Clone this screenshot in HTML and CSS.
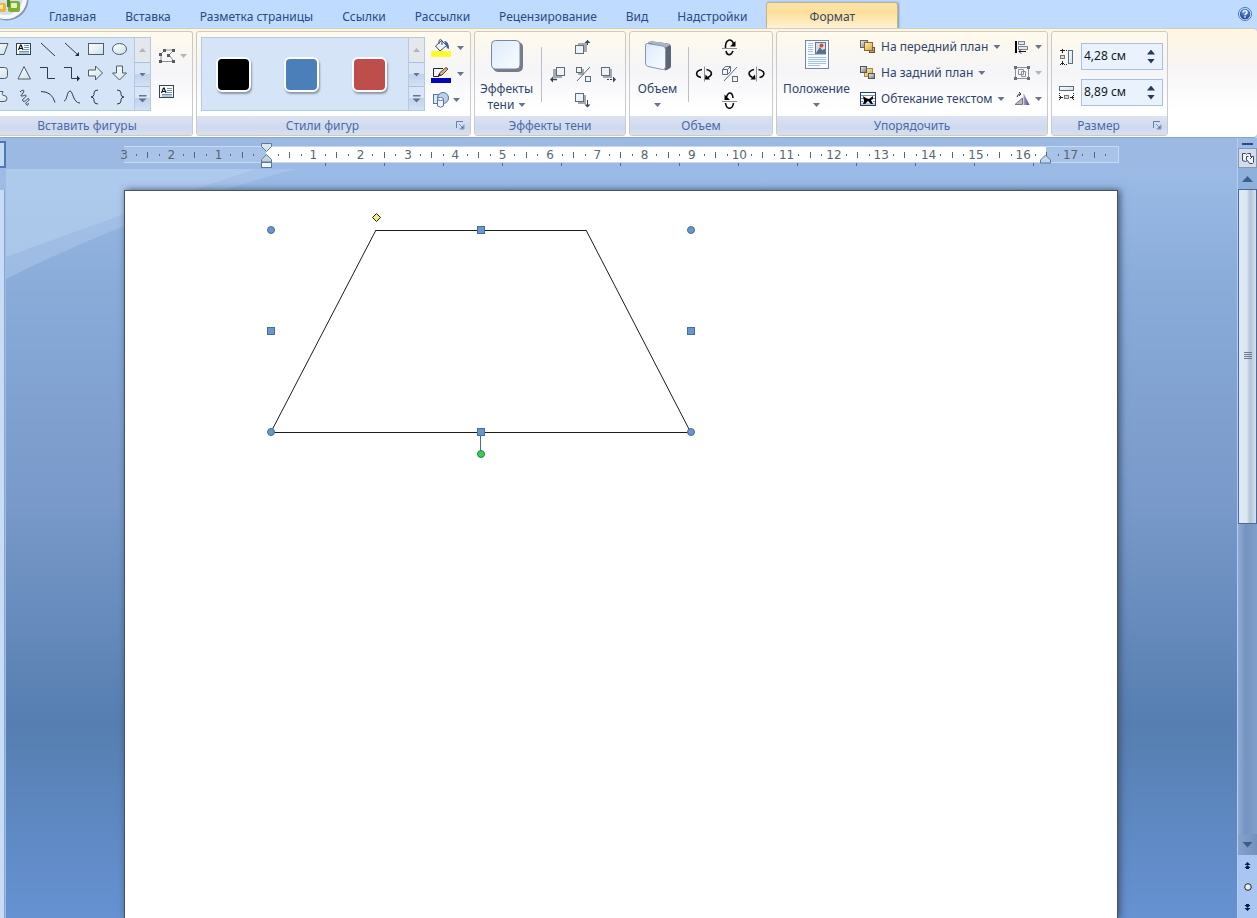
FILE: index.html
```html
<!DOCTYPE html>
<html lang="ru">
<head>
<meta charset="utf-8">
<title>Документ</title>
<link rel="stylesheet" href="styles.css">
</head>
<body>
<svg class="defs" width="0" height="0" aria-hidden="true">
  <defs>
    <linearGradient id="gShape" x1="0" y1="0" x2="1" y2="1"><stop offset="0" stop-color="#fff"/><stop offset="1" stop-color="#cfe0e6"/></linearGradient>
    <linearGradient id="gBig" x1="0" y1="0" x2="1" y2="1"><stop offset="0" stop-color="#dceafc"/><stop offset="1" stop-color="#fbfdff"/></linearGradient>
    <linearGradient id="gGold" x1="0" y1="0" x2="1" y2="1"><stop offset="0" stop-color="#fdf0b0"/><stop offset="1" stop-color="#d9a63a"/></linearGradient>
    <linearGradient id="gGrey" x1="0" y1="0" x2="1" y2="1"><stop offset="0" stop-color="#f4f4f4"/><stop offset="1" stop-color="#777"/></linearGradient>
    <linearGradient id="gViolet" x1="0" y1="0" x2="1" y2="0"><stop offset="0" stop-color="#a99fd0"/><stop offset="1" stop-color="#4b4188"/></linearGradient>
    <radialGradient id="gHelp" cx=".5" cy=".3" r=".7"><stop offset="0" stop-color="#6fa2e8"/><stop offset="1" stop-color="#173f94"/></radialGradient>
  </defs>
</svg>

<header class="tabbar">
  <button class="office" aria-label="Кнопка Office">
    <svg width="30" height="22" viewBox="0 0 30 22"><circle cx="7" cy="-1" r="21.500" fill="#8795ad"/><circle cx="6" cy="-2" r="21" fill="#f6f8fb"/><circle cx="5" cy="-3" r="18" fill="#d5dfec"/><rect x="-4" y="3" width="10" height="9" rx="2" fill="#f1b33c"/><rect x="-1" y="5" width="4" height="4" fill="#fde9a8"/><rect x="8" y="1" width="12" height="11" rx="2" fill="#7fae34"/><rect x="11" y="3" width="6" height="5" rx="1" fill="#e4f2bd"/><rect x="7" y="0" width="3" height="7" fill="#4e8a2c"/></svg>
  </button>
  <nav class="tabs">
    <a href="#home">Главная</a>
    <a href="#insert">Вставка</a>
    <a href="#layout">Разметка страницы</a>
    <a href="#refs">Ссылки</a>
    <a href="#mail">Рассылки</a>
    <a href="#review">Рецензирование</a>
    <a href="#view">Вид</a>
    <a href="#addins">Надстройки</a>
    <a href="#format" class="active">Формат</a>
  </nav>
  <button class="help" aria-label="Справка">
    <svg width="14" height="14" viewBox="0 0 14 14"><circle cx="7" cy="7" r="6.500" fill="#dbe9fb" stroke="#4a72b5"/><circle cx="7" cy="7" r="5.200" fill="url(#gHelp)"/><path d="M5 5.600q0-2 2-2t2 1.800q0 1-1 1.500t-1 1.300M7 9.300v1.400" fill="none" stroke="#fff" stroke-width="1.400"/></svg>
  </button>
</header>

<section class="ribbon">
  <section class="group g-insert">
    <div class="body">
      <div class="gallery">
        <div class="shapes">
          <button aria-label="Параллелограмм"><svg viewBox="0 0 18 18"><path d="M5 3.500h12l-4 11h-12z" fill="url(#gShape)" stroke="#4d5f6b"/></svg></button>
          <button aria-label="Надпись"><svg viewBox="0 0 18 18"><rect x="1.500" y="3.500" width="14" height="11" fill="#fff" stroke="#2f4656"/><path d="M9 5.500h5M9 7.500h5M9 9.500h5M4 11.500h10M4 13h10" stroke="#6b93b5"/><path d="M3.500 10l2-5h.600l2 5M4.300 8.500h3" fill="none" stroke="#111" stroke-width="1.200"/></svg></button>
          <button aria-label="Линия"><svg viewBox="0 0 18 18"><path d="M2 3l14 13" class="ln"/></svg></button>
          <button aria-label="Стрелка"><svg viewBox="0 0 18 18"><path d="M2 3l13 12" class="ln"/><path d="M16 16v-4l-4 4z" fill="#1f2a44"/></svg></button>
          <button aria-label="Прямоугольник"><svg viewBox="0 0 18 18"><rect x="1.500" y="3.500" width="15" height="11" fill="url(#gShape)" stroke="#4d5f6b"/></svg></button>
          <button aria-label="Овал"><svg viewBox="0 0 18 18"><ellipse cx="8.500" cy="9" rx="7" ry="5.500" fill="url(#gShape)" stroke="#4d5f6b"/></svg></button>
          <button aria-label="Скругленный прямоугольник"><svg viewBox="0 0 18 18"><rect x="1.500" y="3.500" width="15" height="11" rx="3" fill="url(#gShape)" stroke="#4d5f6b"/></svg></button>
          <button aria-label="Треугольник"><svg viewBox="0 0 18 18"><path d="M9 2.500l6.500 12.500h-12.500z" fill="url(#gShape)" stroke="#4d5f6b"/></svg></button>
          <button aria-label="Уступ"><svg viewBox="0 0 18 18"><path d="M1 3.500h7.500v11h7.500" class="ln"/></svg></button>
          <button aria-label="Уступ со стрелкой"><svg viewBox="0 0 18 18"><path d="M1 3.500h7.500v11h6" class="ln"/><path d="M17 14.500l-3-3v6z" fill="#1f2a44"/></svg></button>
          <button aria-label="Стрелка вправо"><svg viewBox="0 0 18 18"><path d="M1.500 6h7v-4l7 7-7 7v-4h-7z" fill="url(#gShape)" stroke="#4d5f6b"/></svg></button>
          <button aria-label="Стрелка вниз"><svg viewBox="0 0 18 18"><path d="M5.500 2h6v7h4l-7 7-7-7h4z" fill="url(#gShape)" stroke="#4d5f6b"/></svg></button>
          <button aria-label="Полилиния"><svg viewBox="0 0 18 18"><path d="M4 3.500h8q-2 4 1 4 3 0 3 3t-3 3h-9z" fill="url(#gShape)" stroke="#4d5f6b"/></svg></button>
          <button aria-label="Рисованная кривая"><svg viewBox="0 0 18 18"><path d="M5 4c3-3 5-2 3 1s-3 3-1 3 4-2 4 0-5 3-3 5 5-4 6-2-4 3-3 5 3 1 2-1" class="ln"/></svg></button>
          <button aria-label="Дуга"><svg viewBox="0 0 18 18"><path d="M2 3.500q11 0 14 11" class="ln"/></svg></button>
          <button aria-label="Кривая"><svg viewBox="0 0 18 18"><path d="M1 13c3 0 3-10 6-10s3 12 10 12" class="ln"/></svg></button>
          <button aria-label="Левая скобка"><svg viewBox="0 0 18 18"><path d="M11 2q-4 0-4 3v1.500q0 2-3 2.500q3 .500 3 2.500v1.500q0 3 4 3" class="ln"/></svg></button>
          <button aria-label="Правая скобка"><svg viewBox="0 0 18 18"><path d="M6 2q4 0 4 3v1.500q0 2 3 2.500q-3 .500-3 2.500v1.500q0 3-4 3" class="ln"/></svg></button>
        </div>
        <div class="scroll">
          <button aria-label="Вверх" class="off"><i class="tri up"></i></button>
          <button aria-label="Вниз"><i class="tri"></i></button>
          <button aria-label="Дополнительно"><i class="tri more"></i></button>
        </div>
      </div>
      <div class="edit">
        <button class="row" aria-label="Изменить фигуру"><svg width="18" height="16" viewBox="0 0 18 16"><path d="M2 13.500V6l4-4h9l-5 5 5 6.500z" fill="none" stroke="#8a8f96"/><path d="M0 5h3v3H0zM4 1h3v3H4zM13 1h3v3h-3zM8 6h3v3H8zM0 12h3v3H0zM13 12h3v3h-3z" fill="#555b66"/></svg><i class="tri off"></i></button>
        <button class="row" aria-label="Добавить надпись"><svg width="18" height="16" viewBox="0 0 18 16"><rect x=".500" y="1.500" width="14" height="12" fill="#fff" stroke="#2f4656"/><path d="M8 4.500h5M8 6.500h5M8 8.500h5M3 10.500h10M3 12h10" stroke="#6b93b5"/><path d="M2.500 9l2-5h.600l2 5M3.300 7.500h3" fill="none" stroke="#111" stroke-width="1.200"/></svg></button>
      </div>
    </div>
    <footer><h2>Вставить фигуры</h2></footer>
  </section>

  <section class="group g-styles">
    <div class="body">
      <div class="gallery">
        <div class="swatches">
          <button class="black" aria-label="Черный"></button>
          <button class="blue" aria-label="Синий"></button>
          <button class="red" aria-label="Красный"></button>
        </div>
        <div class="scroll">
          <button aria-label="Вверх" class="off"><i class="tri up"></i></button>
          <button aria-label="Вниз"><i class="tri"></i></button>
          <button aria-label="Дополнительно"><i class="tri more"></i></button>
        </div>
      </div>
      <div class="fills">
        <button class="row" aria-label="Заливка фигуры"><svg width="20" height="20" viewBox="0 0 20 20"><rect y="13" width="20" height="6" rx="1" fill="#fcfc2c"/><path d="M4.500 8l6-5.500 5 5-6.500 5.500z" fill="url(#gBig)" stroke="#3f4f63"/><path d="M8 6V2.500q1-2 3 0V7" fill="none" stroke="#3f4f63"/><path d="M13 3q5 0 5 8-3-1-3-4z" fill="#3c5f9a"/></svg><i class="tri"></i></button>
        <button class="row" aria-label="Контур фигуры"><svg width="20" height="20" viewBox="0 0 20 20"><rect y="14" width="20" height="5" fill="#0404b8"/><path d="M12 4.500H2.500v8H8" fill="none" stroke="#1c2430"/><path d="M7.500 12l1.500-3.500 6-5 2 1.500-6 6z" fill="#dcae78" stroke="#5f4a38"/><path d="M7 12.500l1-3 2 1.500z" fill="#222"/></svg><i class="tri"></i></button>
        <button class="row" aria-label="Изменить фигуру"><svg width="20" height="18" viewBox="0 0 20 18"><rect x="2.500" y="3.500" width="9" height="9" fill="#d8e8f8" stroke="#55779f"/><circle cx="12" cy="7" r="5.500" fill="#b9d0ea" stroke="#55779f"/><path d="M6.500 8v7q3 2.500 6 0V8z" fill="#eef5fc" stroke="#55779f"/><ellipse cx="9.500" cy="8" rx="3" ry="1.500" fill="#fff" stroke="#55779f"/></svg><i class="tri near"></i></button>
      </div>
    </div>
    <footer><h2>Стили фигур</h2><button class="launch" aria-label="Параметры стилей"><svg width="9" height="9" viewBox="0 0 9 9"><path d="M.500 7V.500H7" fill="none" stroke="#66809f"/><path d="M3 3l4 4M8 3.500V8H3.500" fill="none" stroke="#7f97b8"/><path d="M7.500 4.500v3H4.500z" fill="#4c6a90"/></svg></button></footer>
  </section>

  <section class="group g-shadow">
    <div class="body">
      <button class="big">
        <svg width="34" height="34" viewBox="0 0 34 34"><rect x="3" y="3" width="30" height="30" rx="5" fill="#777d88"/><rect x="1.500" y="1.500" width="28.500" height="28.500" rx="4" fill="url(#gBig)" stroke="#77879f"/></svg>
        <span>Эффекты<br>тени <i class="tri inline"></i></span>
      </button>
      <div class="cross">
        <button class="n" aria-label="Сдвинуть тень вверх"><svg viewBox="0 0 18 18"><rect x="4" y="4" width="9" height="9" fill="#a5a9ad"/><rect x="1.500" y="6.500" width="8" height="8" fill="#eef3f7" stroke="#5f6c78"/><path d="M13.500 1v6" stroke="#33465c" stroke-dasharray="5 1"/><path d="M10.500 4l3-3 3 3z" fill="#33465c"/></svg></button>
        <button class="w" aria-label="Сдвинуть тень влево"><svg viewBox="0 0 18 18"><rect x="4" y="4" width="9" height="9" fill="#a5a9ad"/><rect x="7.500" y="2.500" width="8" height="8" fill="#eef3f7" stroke="#5f6c78"/><path d="M3 14.500h5" stroke="#33465c" stroke-width="1.400"/><path d="M4 11.500l-3 3 3 3z" fill="#33465c"/></svg></button>
        <button class="c" aria-label="Включить тень"><svg viewBox="0 0 18 18"><rect x="4" y="4" width="6" height="6" fill="#a5a9ad"/><rect x="2.500" y="2.500" width="5" height="5" fill="#eef3f7" stroke="#5f6c78"/><path d="M16 2L3 16" stroke="#5f6c78"/><rect x="11.500" y="11.500" width="5" height="5" fill="#eef3f7" stroke="#5f6c78"/></svg></button>
        <button class="e" aria-label="Сдвинуть тень вправо"><svg viewBox="0 0 18 18"><rect x="4" y="4" width="9" height="9" fill="#a5a9ad"/><rect x="2.500" y="2.500" width="8" height="8" fill="#eef3f7" stroke="#5f6c78"/><path d="M8 14.500h7" stroke="#33465c" stroke-dasharray="2 1"/><path d="M14 11.500l3 3-3 3z" fill="#33465c"/></svg></button>
        <button class="s" aria-label="Сдвинуть тень вниз"><svg viewBox="0 0 18 18"><rect x="4" y="4" width="8" height="9" fill="#a5a9ad"/><rect x="1.500" y="2.500" width="8" height="8" fill="#eef3f7" stroke="#5f6c78"/><path d="M13.500 9v6" stroke="#33465c"/><path d="M10.500 13.500l3 3 3-3z" fill="#33465c"/></svg></button>
      </div>
    </div>
    <footer><h2>Эффекты тени</h2></footer>
  </section>

  <section class="group g-volume">
    <div class="body">
      <button class="big">
        <svg width="34" height="34" viewBox="0 0 34 34"><path d="M7 3.500q2-1.500 5-1l15 2q3 .500 3 4v19q0 2-6 4z" fill="#5d6675"/><path d="M7 3.500q2-1.500 5-1l15 2q2 .500 2 1.500l-5 3z" fill="#a9b5c8"/><path d="M6.500 4.500l15 2.500q3 .500 3 3.500v17q0 3.500-3 3L7 27.500q-2.500-.500-2.500-3.500V7q0-3 2-2.500z" fill="url(#gBig)" stroke="#8595b0"/></svg>
        <span>Объем</span><i class="tri"></i>
      </button>
      <div class="cross">
        <button class="n" aria-label="Наклонить вверх"><svg viewBox="0 0 18 18"><path d="M1 9.500h15" stroke="#8a8f96"/><path d="M4.500 9C4 0 11-1.500 12.500 5M5 12c1 5 5 5 7 0" class="rot"/><path d="M14.500 2v5.500h-5.500z" fill="#000"/></svg></button>
        <button class="w" aria-label="Повернуть влево"><svg viewBox="0 0 18 18"><path d="M9.500 1.500v15" stroke="#8a8f96"/><path d="M7 4.500c-7 1.500-7 6.500-1 8M11.500 4.500c6 1.500 6.500 5.500 1.500 8" class="rot"/><path d="M10 14.500h5l-4.500-5z" fill="#000"/></svg></button>
        <button class="c" aria-label="Включить объем"><svg viewBox="0 0 18 18"><path d="M1.500 4.500l3-3h5v5l-3 3h-5zM1.500 4.500h5v5M6.500 4.500l3-3" fill="#eef3f7" stroke="#5f6c78"/><path d="M16 2L3 16" stroke="#5f6c78"/><rect x="11.500" y="11.500" width="5" height="5" fill="#eef3f7" stroke="#5f6c78"/></svg></button>
        <button class="e" aria-label="Повернуть вправо"><svg viewBox="0 0 18 18"><path d="M9.500 1.500v15" stroke="#8a8f96"/><path d="M7 4.500c-6 1.500-6.500 5.500-1.500 8M11.500 4.500c7 1.500 7 6.500 1 8" class="rot"/><path d="M8.500 14.500h-5l4.500-5z" fill="#000"/></svg></button>
        <button class="s" aria-label="Наклонить вниз"><svg viewBox="0 0 18 18"><path d="M1 10.500h15" stroke="#8a8f96"/><path d="M5.500 6c2-6 6-5 6.500 1M4.500 12c1 7 7 7 8 0" class="rot"/><path d="M3.500 3.500v5.500h5.500z" fill="#000"/></svg></button>
      </div>
    </div>
    <footer><h2>Объем</h2></footer>
  </section>

  <section class="group g-arrange">
    <div class="body">
      <button class="big">
        <svg width="34" height="34" viewBox="0 0 34 34"><rect x="5.500" y="1.500" width="23" height="28" fill="#f7fafe" stroke="#7186a8"/><path d="M8 4.500h5M8 6.500h5M8 8.500h5M8 10.500h5M8 12.500h5M8 15.500h18M8 18.500h18M8 20.500h18M8 22.500h18M8 24.500h18M8 26.500h12" stroke="#a5c0e6"/><rect x="15.500" y="3.500" width="10" height="11" fill="#d5dde8" stroke="#6a7482"/><circle cx="21.500" cy="6.500" r="2" fill="#c94e3c"/><path d="M16 14l4-6 2 3 3-1v4z" fill="#52708c"/></svg>
        <span>Положение</span><i class="tri"></i>
      </button>
      <div class="order">
        <button class="row"><svg width="16" height="16" viewBox="0 0 16 16"><rect x=".500" y="1.500" width="7" height="7" fill="url(#gGrey)" stroke="#6d6250"/><rect x="9.500" y="8.500" width="5" height="5" fill="url(#gGrey)" stroke="#6d5130"/><rect x="4.500" y="3.500" width="8" height="8" fill="url(#gGold)" stroke="#8a6a28"/></svg><span>На передний план</span><i class="tri"></i></button>
        <button class="row"><svg width="16" height="16" viewBox="0 0 16 16"><rect x="4.500" y="3.500" width="8" height="8" fill="url(#gGold)" stroke="#a58a48"/><rect x=".500" y="1.500" width="6" height="6" fill="url(#gGrey)" stroke="#555"/><rect x="8.500" y="8.500" width="6" height="5" fill="url(#gGrey)" stroke="#555"/></svg><span>На задний план</span><i class="tri"></i></button>
        <button class="row"><svg width="16" height="16" viewBox="0 0 16 16"><rect x=".500" y="1.500" width="15" height="13" fill="#fff" stroke="#27415c"/><path d="M1 4.500h14M1 7.500h3M12 7.500h3M1 10.500h2M13 10.500h2M1 13h14" stroke="#6d93bd"/><path d="M3 5l3 2 3 1 4-3 0 3-2 1 2 4h-2l-3-3-3 3-2 0 1-3z" fill="#050505"/></svg><span>Обтекание текстом</span><i class="tri"></i></button>
      </div>
      <div class="align">
        <button class="row" aria-label="Выровнять"><svg width="16" height="16" viewBox="0 0 16 16"><path d="M2 2v12" stroke="#000" stroke-width="2"/><rect x="4.500" y="2.500" width="6" height="3" fill="#e5e9ee" stroke="#7b8592"/><rect x="4.500" y="7.500" width="9" height="3" fill="#e5e9ee" stroke="#7b8592"/><path d="M5 12.500h7M7 10.500l-2 2 2 2" fill="none" stroke="#111"/></svg><i class="tri"></i></button>
        <button class="row" aria-label="Группировать"><svg width="16" height="16" viewBox="0 0 16 16"><path d="M2 2.500h12M2 13.500h12M1.500 2v12M14.500 2v12M4.500 4.500h5v5h-5zM7.500 6.500h4v5h-4z" fill="none" stroke="#8b8f96"/><path d="M0 1h3v3H0zM13 1h3v3h-3zM0 12h3v3H0zM13 12h3v3h-3z" fill="#6a7079"/></svg><i class="tri off"></i></button>
        <button class="row" aria-label="Повернуть"><svg width="16" height="16" viewBox="0 0 16 16"><path d="M8.500 7v6.500H1z" fill="#b9bcc4" stroke="#777"/><path d="M9.500 2l6 12h-6z" fill="url(#gViolet)"/><path d="M3 6q1-4 4-3M5 1l2 2-2 2" fill="none" stroke="#333"/></svg><i class="tri"></i></button>
      </div>
    </div>
    <footer><h2>Упорядочить</h2></footer>
  </section>

  <section class="group g-size">
    <div class="body">
      <div class="field">
        <label for="h" aria-label="Высота"><svg width="16" height="18" viewBox="0 0 16 18"><path d="M1 2.500h7M1 16.500h7" stroke="#222" stroke-dasharray="1 1"/><path d="M3.500 1v4M3.500 13v4M2 3l1.500-1.500L5 3M2 15l1.500 1.500L5 15" fill="none" stroke="#222"/><rect x="1.500" y="7.500" width="4" height="3" fill="#ddd" stroke="#777"/><rect x="9.500" y="2.500" width="4" height="13" fill="url(#gShape)" stroke="#5f6f83"/></svg></label>
        <div class="spin"><input id="h" type="text" value="4,28 см"><span class="step"><button aria-label="Больше"></button><button class="dn" aria-label="Меньше"></button></span></div>
      </div>
      <div class="field">
        <label for="w" aria-label="Ширина"><svg width="16" height="18" viewBox="0 0 16 18"><rect x=".500" y="2.500" width="14" height="4" fill="url(#gShape)" stroke="#5f6f83"/><path d="M.500 9v7M14.500 9v7" stroke="#222" stroke-dasharray="1 1"/><path d="M0 13.500h4M11 13.500h4M2 12l-1.500 1.500L2 15M13 12l1.500 1.500L13 15" fill="none" stroke="#222"/><rect x="5.500" y="11.500" width="4" height="3" fill="#ddd" stroke="#777"/></svg></label>
        <div class="spin"><input id="w" type="text" value="8,89 см"><span class="step"><button aria-label="Больше"></button><button class="dn" aria-label="Меньше"></button></span></div>
      </div>
    </div>
    <footer><h2>Размер</h2><button class="launch" aria-label="Параметры размера"><svg width="9" height="9" viewBox="0 0 9 9"><path d="M.500 7V.500H7" fill="none" stroke="#66809f"/><path d="M3 3l4 4M8 3.500V8H3.500" fill="none" stroke="#7f97b8"/><path d="M7.500 4.500v3H4.500z" fill="#4c6a90"/></svg></button></footer>
  </section>
</section>

<main class="work">
  <div class="vruler"><button class="corner" aria-label="Табуляция"></button><div class="vscale"></div></div>
  <div class="center">
    <div class="rulerbar">
      <div class="ruler">
        <div class="cell"><b>3</b></div><div class="cell"><b>2</b></div><div class="cell"><b>1</b></div><div class="cell"></div>
        <div class="cell"><b>1</b></div><div class="cell"><b>2</b></div><div class="cell"><b>3</b></div><div class="cell"><b>4</b></div>
        <div class="cell"><b>5</b></div><div class="cell"><b>6</b></div><div class="cell"><b>7</b></div><div class="cell"><b>8</b></div>
        <div class="cell"><b>9</b></div><div class="cell"><b>10</b></div><div class="cell"><b>11</b></div><div class="cell"><b>12</b></div>
        <div class="cell"><b>13</b></div><div class="cell"><b>14</b></div><div class="cell"><b>15</b></div><div class="cell"><b>16</b></div>
        <div class="cell"><b>17</b></div>
        <svg class="mark left" width="12" height="26" viewBox="0 0 12 26"><path d="M.500.500h10v3l-5 5-5-5z" fill="#dbe6ec" stroke="#5a7a9c"/><path d="M5.500 11.500l5 5v2.500H.500v-2.500z" fill="#c4d2da" stroke="#5a7a9c"/><rect x=".500" y="19.500" width="10" height="5" fill="#f1f6fa" stroke="#5a7a9c"/></svg>
        <svg class="mark right" width="12" height="10" viewBox="0 0 12 10"><path d="M5.500 1l5 5v3H.500V6z" fill="#c4d6ea" stroke="#5a7a9c"/></svg>
      </div>
      <div class="stops"></div>
    </div>
    <div class="canvas">
      <svg class="swoosh" width="300" height="120" viewBox="0 0 300 120"><path d="M0 0H290Q140 40 0 110z" fill="#b4cdee" opacity=".45"/><path d="M0 0H250Q130 40 0 88z" fill="#b6d2f0" opacity=".5"/></svg>
      <article class="page">
        <svg width="440" height="260" viewBox="0 0 440 260">
          <path d="M10 232L115 30" class="side"/><path d="M325 30L429.500 232" class="side"/>
          <path d="M115 30H325M10 232H430" class="edge"/>
          <path d="M219.500 236v15" stroke="#456f9c"/>
          <path d="M115.500 13.500l4 4-4 4-4-4z" fill="#f2ee7c" stroke="#1f1f10"/>
          <g class="knob"><circle cx="10" cy="30" r="3.500"/><circle cx="430" cy="30" r="3.500"/><circle cx="10" cy="232" r="3.500"/><circle cx="430" cy="232" r="3.500"/>
          <rect x="216.500" y="26.500" width="7" height="7"/><rect x="216.500" y="228.500" width="7" height="7"/><rect x="6.500" y="127.500" width="7" height="7"/><rect x="426.500" y="127.500" width="7" height="7"/></g>
          <circle cx="220" cy="254" r="3.500" fill="#3fc95c" stroke="#1c8a3a"/>
        </svg>
      </article>
    </div>
  </div>
  <aside class="vbar">
    <div class="split"></div>
    <button class="rtoggle" aria-label="Линейка"><svg width="14" height="14" viewBox="0 0 14 14"><path d="M1.500 9.500v-7h3l1 1 1-1h3v3h3v6l-1 1h-3l-2-3-2 1z" fill="#eef3fa" stroke="#3c4a5c"/><path d="M7.500 5.500h-2v4M9 8l2-2" fill="none" stroke="#3c4a5c"/></svg></button>
    <button class="arrow" aria-label="Вверх"><i class="tri large up"></i></button>
    <div class="thumb"><i></i></div>
    <div class="track"></div>
    <button class="arrow dark" aria-label="Вниз"><i class="tri large"></i></button>
    <div class="browse">
      <button aria-label="Предыдущая страница"><svg width="8" height="8" viewBox="0 0 8 8"><path d="M3.500 0L6.500 3H.500zM3.500 3L6.500 6H.500zM2 6h3v1H2z" fill="#0c1b46"/></svg></button>
      <button aria-label="Выбор объекта"><svg width="8" height="8" viewBox="0 0 8 8"><circle cx="4" cy="4" r="3.300" fill="url(#gShape)" stroke="#222"/></svg></button>
      <button aria-label="Следующая страница"><svg width="8" height="8" viewBox="0 0 8 8"><path d="M2 0h3v1H2zM.500 1h6l-3 3zM.500 4h6l-3 3z" fill="#0c1b46"/></svg></button>
    </div>
  </aside>
</main>
</body>
</html>
```

FILE: styles.css
```css
* { box-sizing: border-box; }
html, body { height: 100%; }
body {
  margin: 0;
  display: flex;
  flex-direction: column;
  overflow: hidden;
  background: #bfdbff;
  color: #1e3c78;
  font: 12px/16px "Noto Sans", "Open Sans", sans-serif;
}
button { margin: 0; padding: 0; border: 0; background: none; color: inherit; font: inherit; }
svg { display: block; flex: none; }
.defs { position: absolute; }
h2 { margin: 0; font-size: 12px; font-weight: 400; }

/* Tabs */
.tabbar { flex: none; display: flex; height: 28px; }
.office { width: 30px; height: 22px; }
.tabs { flex: 1; display: flex; gap: 29px; padding-left: 19px; }
.tabs a { padding-top: 9px; color: #2a4a84; text-decoration: none; white-space: nowrap; }
.tabs .active {
  width: 132px;
  margin: 2px 0 0 -10px;
  padding-top: 6px;
  border: 1px solid #c3b48c;
  border-bottom: 0;
  border-radius: 3px 3px 0 0;
  background: linear-gradient(#f9e3ab, #ffdf9c 35%, #fdeabb 75%, #fdf3da);
  box-shadow: 1px 0 2px #7d93b0;
  color: #3b4560;
  text-align: center;
}
.help { width: 14px; height: 14px; margin: 7px 5px 0 0; }

/* Ribbon */
.ribbon {
  flex: none;
  display: flex;
  gap: 3px;
  height: 110px;
  padding: 2px 0 1px;
  border-top: 1px solid #d3cdbd;
  border-bottom: 1px solid #8ba6c9;
  border-radius: 0 4px 4px 0;
  background: linear-gradient(#fff6df, #f7f5f5 35%, #fff 75%);
}
.group {
  flex: none;
  display: flex;
  flex-direction: column;
  border: 1px solid #cbc9cc;
  border-radius: 3px;
  background: linear-gradient(#fffaec, #f5f5f8 38%, #fff 75%);
  overflow: hidden;
}
.body { flex: 1; display: flex; min-height: 0; }
.group footer {
  flex: none;
  display: flex;
  align-items: center;
  height: 19px;
  background: linear-gradient(#dce2f1, #cfdaef 60%, #d9dfec);
  color: #4a6ba5;
}
.group h2 { flex: 1; padding-top: 1px; text-align: center; white-space: nowrap; }
.launch { width: 12px; height: 12px; margin: 0 2px 0 8px; }
.g-insert { width: 193px; border-left: 0; border-radius: 0 3px 3px 0; }
.g-insert footer { padding-right: 18px; }
.g-styles { width: 275px; }
.g-shadow { width: 152px; }
.g-volume { width: 144px; }
.g-arrange { width: 272px; }
.g-size { width: 117px; }

.tri { display: block; flex: none; width: 7px; height: 4px; background: #66758a; clip-path: polygon(0 0, 100% 0, 50% 100%); }
.tri.up { transform: scaleY(-1); }
.tri.off, .off .tri { background: #b3b5ba; }
.tri.more { height: 8px; width: 8px; clip-path: polygon(0 0, 100% 0, 100% 25%, 0 25%, 0 50%, 100% 50%, 50% 100%, 0 50%); }
.tri.inline { display: inline-block; margin: 0 0 2px 1px; }
.tri.large { width: 11px; height: 6px; background: #3c5d8e; }

.row { display: flex; align-items: center; }
.gallery { display: flex; height: 74px; margin-top: 5px; border: 1px solid #b5c9e2; background: #d5e4f6; }
.g-insert .gallery { margin-left: -13px; }
.shapes { display: grid; grid-template: repeat(3, 24px) / repeat(6, 24px); width: 146px; margin-top: -1px; }
.shapes button { display: grid; place-items: center; }
.shapes svg, .cross svg { width: 18px; height: 18px; }
.ln { fill: none; stroke: #2e3a52; stroke-width: 1; }
.rot { fill: none; stroke: #0c0c14; stroke-width: 1.6; }
.scroll { display: grid; grid-template-rows: repeat(3, 1fr); width: 16px; border-left: 1px solid #b5c9e2; }
.scroll button {
  display: grid;
  place-items: center;
  border-top: 1px solid #a9bfdb;
  background: linear-gradient(#d8e6f7 50%, #bfd3ec 50%, #d3e2f5);
}
.scroll button:first-child { border-top: 0; }
.scroll .off { background: #e4e7ec; }
.edit { display: flex; flex-direction: column; gap: 20px; padding: 16px 0 0 8px; }
.edit .row { gap: 3px; height: 16px; }

.g-styles .gallery { margin-left: 4px; }
.swatches { display: flex; gap: 33px; align-items: center; width: 206px; padding-left: 14px; }
.swatches button { width: 35px; height: 35px; border: 2px solid #fdfdfd; border-radius: 6px; box-shadow: 1px 2px 2px #8d98a5; }
.swatches .black { background: #000; }
.swatches .blue { background: #4b7fb9; }
.swatches .red { background: #bd4e4c; }
.fills { display: flex; flex-direction: column; gap: 6px; padding: 6px 0 0 6px; }
.fills .row { gap: 6px; height: 20px; }
.fills .near { margin-left: -4px; }

.big { display: flex; flex-direction: column; align-items: center; width: 63px; padding-top: 7px; color: #2f4468; }
.big svg { margin-bottom: 8px; }
.big > .tri { margin-top: 6px; }
.g-volume .big { width: 55px; }
.g-arrange .big { width: 79px; }
.cross {
  display: grid;
  grid-template: repeat(3, 26px) / repeat(3, 25px);
  grid-template-areas: ". n ." "w c e" ". s .";
  place-items: center;
  margin-top: 3px;
  padding-left: 7px;
  background: linear-gradient(#b9c0cb, #b9c0cb) 3px 12px / 1px 55px no-repeat;
}
.g-volume .cross { grid-template-columns: repeat(3, 26px); padding-left: 6px; }
.cross button { width: 18px; height: 18px; }
.n { grid-area: n; } .w { grid-area: w; } .c { grid-area: c; } .e { grid-area: e; } .s { grid-area: s; }

.order, .align { display: flex; flex-direction: column; gap: 10px; padding-top: 7px; color: #2f4468; }
.order { width: 158px; padding-left: 4px; }
.order .row, .align .row { gap: 5px; height: 16px; white-space: nowrap; }
.g-size .body { flex-direction: column; gap: 9px; padding: 11px 4px 0 7px; }
.field { display: flex; align-items: center; gap: 6px; }
.spin { flex: 1; display: flex; min-width: 0; height: 27px; border: 1px solid #a9bfdc; background: #e9f2fd; }
.spin input { flex: 1; min-width: 0; padding: 0 0 2px 2px; border: 0; background: none; color: #14181f; font: inherit; }
.step { flex: none; display: flex; flex-direction: column; justify-content: center; gap: 4px; width: 15px; }
.step button { width: 8px; height: 5px; background: #243a5c; clip-path: polygon(50% 0, 100% 100%, 0 100%); }
.step .dn { clip-path: polygon(0 0, 100% 0, 50% 100%); }

/* Work area */
.work { flex: 1; display: flex; min-height: 0; background: #9bbae3; }
.vruler { display: flex; flex-direction: column; width: 6px; background: #9dbbe4; }
.corner { height: 27px; margin-top: 3px; border: 2px solid #4d78b8; border-left: 0; background: #c5d9f3; }
.vscale { flex: 1; width: 5px; margin-top: 22px; border-right: 1px solid #86a7d4; background: #c9dcf5; }
.center { flex: 1; display: flex; flex-direction: column; min-width: 0; }
.rulerbar { flex: none; height: 31px; padding: 8px 119px 0 118px; background: #9bb9e2; }
.ruler {
  position: relative;
  display: flex;
  height: 17px;
  border: solid #c6d9f3;
  border-width: 1px 0;
  box-shadow: 1px 0 #c6d9f3;
  background: linear-gradient(90deg, #a9c3e8 14.3%, #fff 14.3%, #fff 92.8%, #a9c3e8 92.8%);
}
.cell {
  flex: 1;
  min-width: 0;
  background:
    linear-gradient(#5b6675, #5b6675) 25% 50% / 1px 2px no-repeat,
    linear-gradient(#5b6675, #5b6675) 50% 50% / 1px 6px no-repeat,
    linear-gradient(#5b6675, #5b6675) 75% 50% / 1px 2px no-repeat;
}
.cell b { display: block; width: 20px; margin-left: -10px; color: #5c6470; font: 12px/16px "DejaVu Sans", sans-serif; text-align: center; }
.mark { position: absolute; }
.mark.left { left: 14.3%; top: -4px; margin-left: -5px; }
.mark.right { left: 92.8%; top: 7px; margin-left: -6px; }
.stops { height: 3px; margin: 0 81px 0 201px; background: repeating-linear-gradient(90deg, #4d6a92 0 1px, transparent 1px 59px); }
.canvas {
  position: relative;
  flex: 1;
  display: flex;
  padding: 21px 119px 0 118px;
  background: linear-gradient(#9bbbe6, #8badda 14%, #7899c9 45%, #567eb0 74%, #6692d2);
  overflow: hidden;
}
.swoosh { position: absolute; left: 0; top: 0; }
.page { position: relative; flex: 1; padding: 9px 0 0 136px; border: 1px solid #4a5260; border-bottom: 0; background: #fff; box-shadow: 2px 0 7px #3d5170; }
.side { fill: none; stroke: #1c1c1c; }
.edge { fill: none; stroke: #1c1c1c; shape-rendering: crispEdges; }
.knob { fill: #6c95cc; stroke: #456f9c; }

.vbar { display: flex; flex-direction: column; width: 20px; border-left: 1px solid #b4cdf2; background: #9bbae6; }
.split { flex: none; width: 11px; height: 2px; margin: 5px 0 3px 4px; background: #2e4a7d; }
.rtoggle { flex: none; display: grid; place-items: center; height: 20px; border: 1px solid #8798b2; background: #d3dced; }
.arrow { flex: none; display: grid; place-items: center; height: 21px; background: #8fb0db; }
.arrow.dark { background: linear-gradient(90deg, #86a3cc, #7391bd); }
.thumb { flex: 334; display: grid; place-items: center; border: 1px solid #4a6a9d; background: linear-gradient(90deg, #dfeaf6 10%, #dce7f2 45%, #b3c4d8 65%, #d5e1ee); }
.thumb i { width: 8px; height: 8px; background: repeating-linear-gradient(#6c7c90 0 1px, transparent 1px 2px); }
.track { flex: 311; background: linear-gradient(90deg, #8fabd4, #7593c0 40%, #809fca); }
.browse { flex: none; display: flex; flex-direction: column; justify-content: space-around; align-items: center; height: 63px; background: #a9c6f3; }
.browse button { width: 8px; height: 8px; }
```
